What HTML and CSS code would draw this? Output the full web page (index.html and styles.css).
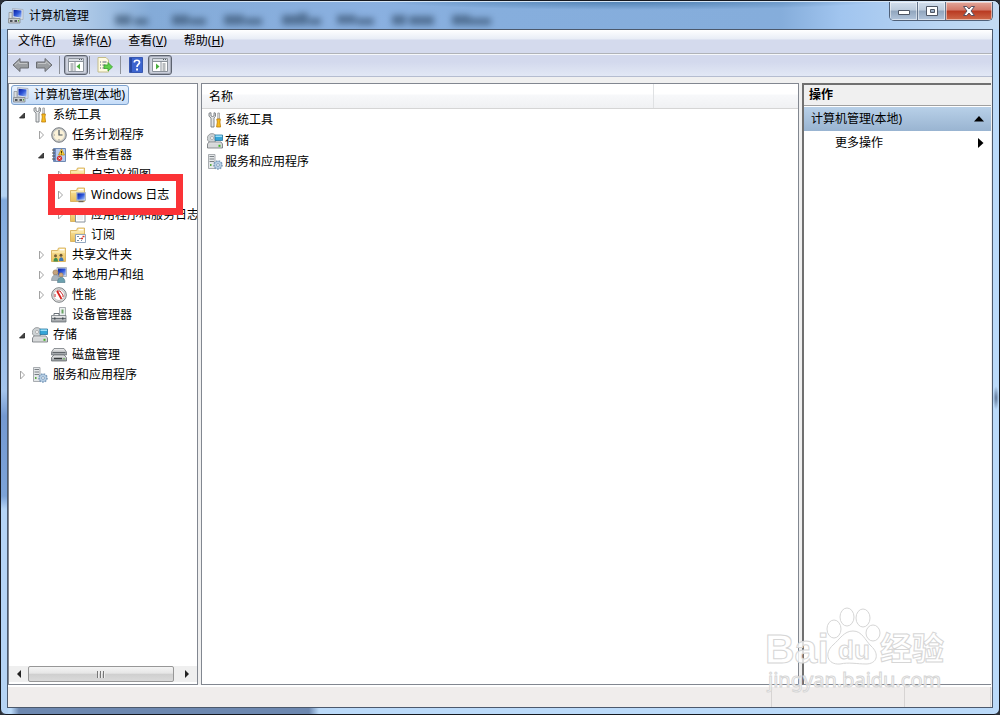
FILE: index.html
```html
<!DOCTYPE html>
<html lang="zh-CN">
<head>
<meta charset="utf-8">
<title>计算机管理</title>
<link rel="stylesheet" href="styles.css">
</head>
<body>
<svg class="sprite" aria-hidden="true">
  <defs>
    <linearGradient id="g-metal" x1="0" y1="0" x2="0" y2="1"><stop offset="0" stop-color="#f4f4f4"/><stop offset="1" stop-color="#8f9498"/></linearGradient>
    <linearGradient id="g-fold" x1="0" y1="0" x2="0" y2="1"><stop offset="0" stop-color="#fbe7a4"/><stop offset="1" stop-color="#e9c05c"/></linearGradient>
    <linearGradient id="g-screen" x1="0" y1="0" x2="1" y2="1"><stop offset="0" stop-color="#0a1d9c"/><stop offset=".5" stop-color="#2f57d8"/><stop offset="1" stop-color="#a9c6f8"/></linearGradient>
    <symbol id="i-computer" viewBox="0 0 16 16">
      <path d="M4.500.5 15 1.500V11.500L4.500 9.500Z" fill="#dfe6ee" stroke="#a3acb8" stroke-width=".8"/>
      <path d="M5.500 1.800 13.500 2.600V9.700L5.500 8.300Z" fill="url(#g-screen)"/>
      <path d="M1 4.500h3v6H1z" fill="#d9dcdf" stroke="#878c92" stroke-width=".7"/>
      <path d="M.5 10.500h11.500v4.500H.5z" fill="#c6cacd" stroke="#85898d" stroke-width=".8"/>
      <path d="M2 12h2.500v2H2zM6.500 12h2.500v2H6.500z" fill="#4e555b"/><path d="M10 12h1v1.500h-1z" fill="#53a52f"/>
    </symbol>
    <symbol id="i-tools" viewBox="0 0 16 16">
      <path d="M2 1.200v3L4 6v9h3V6l1.500-1.800v-3L7 .7V4L5.500 4.500 4 4V.7Z" fill="#e3e5e6" stroke="#777c80" stroke-width=".9"/>
      <path d="M10.800 1h1.600v6h-1.600z" fill="#eee" stroke="#888" stroke-width=".7"/>
      <path d="M9.800 7h3.600l-.5 3 .7 5h-4l.7-5Z" fill="#f8bd20" stroke="#bc7c08" stroke-width=".8"/>
    </symbol>
    <symbol id="i-clock" viewBox="0 0 16 16">
      <circle cx="8" cy="8" r="7.300" fill="#bfc2c4" stroke="#7d8184"/><circle cx="8" cy="8" r="5.600" fill="#fbf2d8" stroke="#e3ddc9" stroke-width=".6"/>
      <path d="M8 3v5h3.500" fill="none" stroke="#48545e" stroke-width="1.200"/><path d="M8 12v1.500M3 8h1" stroke="#999"/>
    </symbol>
    <symbol id="i-event" viewBox="0 0 16 16">
      <path d="M2.500 1.500h12v13h-12z" fill="#b6cbed" stroke="#6f89b3"/><path d="M3 2h2v12H3z" fill="#6c89bd"/>
      <path d="M1 3h3M1 6h3M1 9h3M1 12h3" stroke="#555"/>
      <path d="M10.500 2 13.500 8H7.500Z" fill="#fad33b" stroke="#c38b0a" stroke-width=".7"/><path d="M10.500 4v2.300M10.500 6.800v.7" stroke="#493600"/>
      <circle cx="8.500" cy="11.300" r="2.600" fill="#d42c2c"/><path d="m7.500 10.300 2 2m0-2-2 2" stroke="#fff" stroke-width=".8"/>
    </symbol>
    <symbol id="i-folder" viewBox="0 0 16 16">
      <path d="M.5 3.500h6l1-2.500h7v13.500H.5z" fill="url(#g-fold)" stroke="#d3aa50" stroke-width=".8"/><path d="M8.500 2h5v1.500h-5z" fill="#fff"/><path d="M1 5h13" stroke="#fff3c6"/>
    </symbol>
    <symbol id="i-filter" viewBox="0 0 16 16">
      <use href="#i-folder"/><path d="M8 8h7l-2.500 3v4l-2-1v-3Z" fill="#8a9097" stroke="#51575c" stroke-width=".7"/>
    </symbol>
    <symbol id="i-winlog" viewBox="0 0 16 16">
      <use href="#i-folder"/><path d="M6.500 5.500h9v8h-9z" fill="#dce3ec" stroke="#9aa3ad" stroke-width=".7"/><path d="M7.300 6.300h7.500v6.400H7.300z" fill="url(#g-screen)"/><path d="M8.500 14.700h5" stroke="#555"/>
    </symbol>
    <symbol id="i-applog" viewBox="0 0 16 16">
      <use href="#i-folder"/><path d="M5.500 5.500h9.500v9.500h-9.500z" fill="#fff" stroke="#88919a"/><path d="M7 8h6M7 10h6M7 12h6" stroke="#dde2e7"/>
    </symbol>
    <symbol id="i-subs" viewBox="0 0 16 16">
      <use href="#i-folder"/><path d="M5.500 7.500h10v8h-10z" fill="#fff" stroke="#7893b2" stroke-width=".8"/><path d="M7 9.500h2M9 11.500h2M7 13.500h2M11 13.500h1" stroke="#788da3"/><path d="M11 11.500h2M12.500 9.500h2" stroke="#d6372b" stroke-width="1.400"/>
    </symbol>
    <symbol id="i-share" viewBox="0 0 16 16">
      <use href="#i-folder"/><circle cx="4.500" cy="8.700" r="1.500" fill="#74603a"/><circle cx="10" cy="8.300" r="1.500" fill="#6c5635"/><path d="M2.500 14.500c0-5 4.500-5 4.500 0Z" fill="#3e8e4d"/><path d="M8 14c0-5 4.500-5 4.500 0Z" fill="#3c76b8"/>
    </symbol>
    <symbol id="i-users" viewBox="0 0 16 16">
      <path d="M6 .5h9.500V9.500H6z" fill="#d9e0ea" stroke="#a0a8b4" stroke-width=".8"/><path d="M7 1.500h7.700v7H7z" fill="url(#g-screen)"/>
      <circle cx="4.500" cy="5.500" r="2.600" fill="#c6a47d" stroke="#8f7455" stroke-width=".6"/><path d="M.5 13.500c0-7.500 8-7.500 8 0Z" fill="#aab3bb" stroke="#7e8890" stroke-width=".6"/>
      <circle cx="10" cy="8" r="2.200" fill="#cfa981" stroke="#8f7455" stroke-width=".6"/><path d="M6.500 15.500c0-7 7.500-7 7.500 0Z" fill="#6ba0ae" stroke="#4b7686" stroke-width=".6"/>
    </symbol>
    <symbol id="i-perf" viewBox="0 0 16 16">
      <circle cx="8" cy="8" r="7.300" fill="#e4e4e4" stroke="#7c8083"/><circle cx="8" cy="8" r="5.500" fill="#fff" stroke="#a6a6a6" stroke-width=".7"/><path d="M6 4 10.500 12" stroke="#d8231e" stroke-width="1.800"/><path d="M4 10V7M6 4h3l3 4v2" fill="none" stroke="#c4292c"/>
    </symbol>
    <symbol id="i-device" viewBox="0 0 16 16">
      <path d="M8.500.5h6v9h-6z" fill="#eceff0" stroke="#94999d" stroke-width=".8"/><path d="M10.500 2.500h2v4h-2z" fill="#6aa464"/>
      <path d="M.5 8.500h14.500V15H.5z" fill="url(#g-metal)" stroke="#71787d" stroke-width=".8"/><path d="M3 8V6.500h5v2M1 11.500h14" fill="none" stroke="#697076"/><path d="M3 10.500h1.500v2H3zM11 10.500h1.500v2H11z" fill="#454d53"/>
    </symbol>
    <symbol id="i-storage" viewBox="0 0 16 16">
      <circle cx="5" cy="5.300" r="4.700" fill="#cdd2d4" stroke="#8b8f92" stroke-width=".8"/><circle cx="5" cy="5" r="1.500" fill="#fff" stroke="#999" stroke-width=".7"/>
      <path d="M8 2h7.500v5.500H8z" fill="#36a5d7" stroke="#27749d" stroke-width=".8"/><path d="M8.500 2.500H15v1.500H8.500z" fill="#9ddef7"/>
      <path d="M2 9h12l1.500 2V15H.5v-4Z" fill="url(#g-metal)" stroke="#6e7478" stroke-width=".8"/><path d="M1 11h14v3.500H1z" fill="#d6d8d9"/><path d="M11.500 11.800h2v2h-2z" fill="#42b424"/>
    </symbol>
    <symbol id="i-disk" viewBox="0 0 16 16">
      <path d="M3 1.500h10L15.500 5v3H.5V5Z" fill="url(#g-metal)" stroke="#74797d" stroke-width=".8"/><path d="M1.500 5.500h13" stroke="#61666a"/><path d="M3 8h10l2.500 2.500V14H.5v-3.500Z" fill="url(#g-metal)" stroke="#696e72" stroke-width=".8"/><path d="M3 11.500h8" stroke="#35393b" stroke-width="1.400"/><path d="M12 11h2v1.500h-2z" fill="#82b676"/>
    </symbol>
    <symbol id="i-services" viewBox="0 0 16 16">
      <path d="M1.500.5h6.500v14h-6.500z" fill="#e4e7e9" stroke="#959b9f" stroke-width=".8"/><path d="M2.500 2.500h4.500M2.500 5h4.500M2.500 7.500h4.500" stroke="#7a8085"/><path d="M3 10h1.500v2H3z" fill="#59a842"/>
      <circle cx="11" cy="11" r="4" fill="#a5c1dc" stroke="#7e9dbb" stroke-width="1.600" stroke-dasharray="1.600 1.100"/><circle cx="11" cy="11" r="3" fill="#b9d0e6"/><circle cx="11" cy="11" r="1.400" fill="#fff" stroke="#6688aa" stroke-width=".7"/>
    </symbol>
    <symbol id="i-closed" viewBox="0 0 10 10"><path d="M3.500 1v8l4-4Z" fill="#fff" stroke="#a3a3a3"/></symbol>
    <symbol id="i-open" viewBox="0 0 10 10"><path d="M7.500 3v5H2.500Z" fill="#444" stroke="#222" stroke-width=".8"/></symbol>
    <symbol id="i-back" viewBox="0 0 18 16"><path d="M1 8 8 1.500V5h8.500v6H8v3.500Z" fill="#9a9da0" stroke="#6a6d72"/><path d="M3 8 7 4.500V6.500h8" fill="none" stroke="#c3c5c7"/></symbol>
    <symbol id="i-tree" viewBox="0 0 18 16">
      <path d="M1.500 1.500h15v13h-15z" fill="#fff" stroke="#8b929b"/><path d="M2 2h14v2H2z" fill="#d7dce2"/><path d="M2 4.500h14M8 5v9" stroke="#8b929b"/><path d="M12 2.500h1M14 2.500h1" stroke="#545b65"/><path d="M3.500 7h3M3.500 9h3M3.500 11h3M3.500 13h3" stroke="#71787f"/><path d="M13 6.500v6L9.500 9.500Z" fill="#49ae3d"/>
    </symbol>
    <symbol id="i-panel" viewBox="0 0 18 16">
      <path d="M1.500 1.500h15v13h-15z" fill="#fff" stroke="#8b929b"/><path d="M2 2h14v2H2z" fill="#d7dce2"/><path d="M2 4.500h14M10 5v9" stroke="#8b929b"/><path d="M12 2.500h1M14 2.500h1" stroke="#545b65"/><path d="M11.500 7h3M11.500 9h3M11.500 11h3M11.500 13h3" stroke="#71787f"/><path d="M5 6.500v6L8.500 9.500Z" fill="#49ae3d"/>
    </symbol>
    <symbol id="i-export" viewBox="0 0 16 16">
      <path d="M1 .5h8L11.500 3v12H1z" fill="#fffbe1" stroke="#c3bc8b"/><path d="M3 5h1M5.500 5h4M3 8h1M5.500 8h3M3 11h1M5.500 11h3" stroke="#5b667d"/><path d="M7 8h4V5.500l4.500 4.500-4.500 4V11.500H7Z" fill="#61cf4b" stroke="#36a22c" stroke-width=".8"/>
    </symbol>
    <symbol id="i-help" viewBox="0 0 14 16">
      <path d="M.5.500h13v15H.5z" fill="#3c64cf" stroke="#3858b0"/><path d="M1 1h2v14H1z" fill="#2848a2"/><path d="M5.300 5.500C5.300 2.500 10.500 2.500 10.500 5.500 10.500 7.500 8 7.500 8 10" fill="none" stroke="#fff" stroke-width="1.700"/><path d="M7.100 11.500H9v2H7.100z" fill="#fff"/>
    </symbol>
  </defs>
</svg>

<div class="window">
  <header class="titlebar">
    <svg class="backdrop" viewBox="0 0 400 28" aria-hidden="true">
      <g class="smudge">
        <path d="M15 14h16v10H15zM34 17h14v7H34zM72 14h17v10H72zM90 17h16v7H90zM124 14h20v10H124zM145 17h17v7H145zM182 14h16v10H182zM198 12h10v12H198zM209 17h12v7H209zM237 14h19v9H237zM257 17h17v7H257zM292 14h14v10H292zM309 15h25v9H309zM352 14h18v10H352zM370 17h21v7H370z"/>
      </g>
    </svg>
    <svg class="icon"><use href="#i-computer"/></svg>
    <h1 class="title">计算机管理</h1>
    <div class="controls">
      <button class="ctl" aria-label="最小化"><svg width="14" height="12"><path d="M1.500 5.500h11v4h-11z" fill="#fff" stroke="#4e5665"/></svg></button>
      <button class="ctl" aria-label="最大化"><svg width="14" height="12"><path d="M1.500 1.500h11v9h-11zM5.500 4.500v3h4v-3z" fill="#fff" fill-rule="evenodd" stroke="#4e5665"/></svg></button>
      <button class="ctl ctl-close" aria-label="关闭"><svg width="14" height="12"><path d="M1.500 1.500h3.300L7 4l2.200-2.500h3.300L9 6l3.500 4.500H9.200L7 8l-2.200 2.500H1.500L5 6Z" fill="#fff" stroke="#575061"/></svg></button>
    </div>
  </header>

  <div class="client">
    <nav class="menubar">
      <button class="menu">文件(<u>F</u>)</button>
      <button class="menu">操作(<u>A</u>)</button>
      <button class="menu">查看(<u>V</u>)</button>
      <button class="menu">帮助(<u>H</u>)</button>
    </nav>
    <div class="toolbar">
      <button class="tool" aria-label="后退"><svg width="18" height="16"><use href="#i-back"/></svg></button>
      <button class="tool flip" aria-label="前进"><svg width="18" height="16"><use href="#i-back"/></svg></button>
      <span class="sep"></span>
      <button class="tool pressed" aria-label="显示/隐藏控制台树"><svg width="18" height="16"><use href="#i-tree"/></svg></button>
      <span class="sep"></span>
      <button class="tool" aria-label="导出列表"><svg width="18" height="16"><use href="#i-export"/></svg></button>
      <span class="sep"></span>
      <button class="tool" aria-label="帮助"><svg width="14" height="16"><use href="#i-help"/></svg></button>
      <button class="tool pressed" aria-label="显示/隐藏操作窗格"><svg width="18" height="16"><use href="#i-panel"/></svg></button>
    </div>

    <main class="panes">
      <section class="pane tree-pane">
        <div class="tree">
          <div class="root"><svg class="icon"><use href="#i-computer"/></svg><span>计算机管理(本地)</span></div>
          <ul class="branch">
            <li>
              <div class="node"><svg class="twisty"><use href="#i-open"/></svg><svg class="icon"><use href="#i-tools"/></svg><span>系统工具</span></div>
              <ul class="branch nested">
                <li><div class="node"><svg class="twisty"><use href="#i-closed"/></svg><svg class="icon"><use href="#i-clock"/></svg><span>任务计划程序</span></div></li>
                <li>
                  <div class="node"><svg class="twisty"><use href="#i-open"/></svg><svg class="icon"><use href="#i-event"/></svg><span>事件查看器</span></div>
                  <ul class="branch nested">
                    <li><div class="node"><svg class="twisty"><use href="#i-closed"/></svg><svg class="icon"><use href="#i-filter"/></svg><span>自定义视图</span></div></li>
                    <li><div class="node marked"><svg class="twisty"><use href="#i-closed"/></svg><svg class="icon"><use href="#i-winlog"/></svg><span>Windows 日志</span></div></li>
                    <li><div class="node"><svg class="twisty"><use href="#i-closed"/></svg><svg class="icon"><use href="#i-applog"/></svg><span>应用程序和服务日志</span></div></li>
                    <li><div class="node"><span class="twisty"></span><svg class="icon"><use href="#i-subs"/></svg><span>订阅</span></div></li>
                  </ul>
                </li>
                <li><div class="node"><svg class="twisty"><use href="#i-closed"/></svg><svg class="icon"><use href="#i-share"/></svg><span>共享文件夹</span></div></li>
                <li><div class="node"><svg class="twisty"><use href="#i-closed"/></svg><svg class="icon"><use href="#i-users"/></svg><span>本地用户和组</span></div></li>
                <li><div class="node"><svg class="twisty"><use href="#i-closed"/></svg><svg class="icon"><use href="#i-perf"/></svg><span>性能</span></div></li>
                <li><div class="node"><span class="twisty"></span><svg class="icon"><use href="#i-device"/></svg><span>设备管理器</span></div></li>
              </ul>
            </li>
            <li>
              <div class="node"><svg class="twisty"><use href="#i-open"/></svg><svg class="icon"><use href="#i-storage"/></svg><span>存储</span></div>
              <ul class="branch nested">
                <li><div class="node"><span class="twisty"></span><svg class="icon"><use href="#i-disk"/></svg><span>磁盘管理</span></div></li>
              </ul>
            </li>
            <li><div class="node"><svg class="twisty"><use href="#i-closed"/></svg><svg class="icon"><use href="#i-services"/></svg><span>服务和应用程序</span></div></li>
          </ul>
        </div>
        <div class="scrollbar">
          <button class="scroll-btn" aria-label="向左滚动"><svg width="6" height="8"><path d="M5 0v8L1 4Z" fill="#222"/></svg></button>
          <div class="thumb"><i></i><i></i><i></i></div>
          <button class="scroll-btn scroll-end" aria-label="向右滚动"><svg width="6" height="8"><path d="M1 0v8l4-4Z" fill="#222"/></svg></button>
        </div>
      </section>

      <section class="pane list-pane">
        <table class="list">
          <thead><tr><th>名称</th><th class="filler" aria-label="空列"></th></tr></thead>
          <tbody>
            <tr><td colspan="2"><div class="item"><svg class="icon"><use href="#i-tools"/></svg>系统工具</div></td></tr>
            <tr><td colspan="2"><div class="item"><svg class="icon"><use href="#i-storage"/></svg>存储</div></td></tr>
            <tr><td colspan="2"><div class="item"><svg class="icon"><use href="#i-services"/></svg>服务和应用程序</div></td></tr>
          </tbody>
        </table>
      </section>

      <aside class="pane actions">
        <h2 class="actions-title">操作</h2>
        <button class="actions-group"><span>计算机管理(本地)</span><svg width="10" height="6"><path d="M0 5.500 5 0l5 5.500Z"/></svg></button>
        <button class="actions-item"><span>更多操作</span><svg width="6" height="10"><path d="M0 0v10l5.500-5Z"/></svg></button>
      </aside>
    </main>

    <footer class="status"><span class="cell grow"></span><span class="cell mid"></span><span class="cell end"></span></footer>
  </div>

  <svg class="watermark" viewBox="0 0 190 94" role="img" aria-label="Baidu 经验">
    <g class="outline">
      <ellipse cx="72" cy="26" rx="7" ry="9"/><ellipse cx="85" cy="14" rx="7" ry="9"/><ellipse cx="101" cy="15" rx="7" ry="9"/><ellipse cx="111" cy="30" rx="7" ry="8"/>
      <path d="M91 28c9 0 12 9 18 15 9 8 6 18-5 18-9 0-17-2-26 0-13 1-16-11-7-19 7-6 11-14 20-14Z"/>
      <text x="3" y="60" class="wm-big">Bai</text>
      <text x="76" y="56" class="wm-du">du</text>
      <text x="118" y="57" class="wm-cjk">经验</text>
      <text x="6" y="84" class="wm-url">jingyan.baidu.com</text>
    </g>
  </svg>
</div>
</body>
</html>
```
FILE: styles.css
```css
*, ::before { box-sizing: border-box; }

body {
  margin: 0;
  background: #2b3038;
  color: #000;
  font: 12px/20px "Noto Sans", "Noto Sans CJK SC", sans-serif;
}

button {
  margin: 0;
  padding: 0;
  border: 0;
  background: none;
  color: inherit;
  font: inherit;
}

ul { margin: 0; padding: 0; list-style: none; }
svg { display: block; flex: none; }
.sprite { position: absolute; width: 0; height: 0; }
.icon { width: 16px; height: 16px; }

.window {
  position: relative;
  display: flex;
  flex-direction: column;
  min-height: 100vh;
  padding: 0 6px 6px;
  border: 1px solid #15181f;
  border-radius: 7px 7px 6px 6px;
  background:
    linear-gradient(90deg, transparent 10px, #6d88b0 18px, #6d88b0 308px, transparent 318px) left bottom / 100% 6px no-repeat,
    radial-gradient(closest-side, #5f7696, transparent) right 385px / 6px 24px no-repeat,
    linear-gradient(#a9c9ec, #b4d3f2 195px, #83abdd 199px, #a4c4ec 390px, #7499d1 415px, #7ca3d8 495px, #b5d4f5 508px) left top / 7px 100% no-repeat,
    #bbdaf9;
}

.titlebar {
  position: relative;
  display: flex;
  align-items: center;
  height: 28px;
  margin: 0 -6px;
  padding: 1px 0 0 7px;
  border-radius: 6px 6px 0 0;
  background:
    radial-gradient(closest-side, rgba(64, 116, 166, .8), transparent) 380px -9px / 500px 18px no-repeat,
    linear-gradient(90deg, #c1d7ee, #b0cbe8 80px, #84abd8 150px, #8ab0e0 370px, #86aedd 480px, #85addb 780px, #a1c5ef 840px, #b9d5f3 940px, #c3dbf3);
  box-shadow: inset 0 1px #d5e5f5;
}

.backdrop { position: absolute; left: 99px; top: 0; width: 400px; height: 28px; }
.smudge { fill: #2f4966; opacity: .6; filter: blur(3px); }
.title { position: relative; margin: 0 0 0 5px; font-size: 12px; font-weight: 400; }

.controls {
  display: flex;
  align-self: flex-start;
  height: 19px;
  margin: 0 6px 0 auto;
  border: 1px solid #4f6078;
  border-top: 0;
  border-radius: 0 0 5px 5px;
  overflow: hidden;
}
.ctl {
  display: grid;
  place-items: center;
  width: 28px;
  border-right: 1px solid #65758c;
  background: linear-gradient(#d3dfed, #bccbdc 45%, #91a5bd 50%, #b2c5dc);
  box-shadow: inset 0 0 0 1px rgba(255, 255, 255, .5);
}
.ctl-close { width: 46px; border: 0; background: linear-gradient(#e2a79b, #d27868 45%, #b93921 50%, #ce6a4a); }

.client {
  display: flex;
  flex: 1;
  flex-direction: column;
  border: 1px solid #4c596c;
  background: #f0f0f0;
}

.menubar {
  display: flex;
  gap: 17px;
  height: 24px;
  padding: 1px 10px 2px;
  border-bottom: 1px solid #b0b3b8;
  background: linear-gradient(#fff, #e8edf6 9px, #d4daed 10px, #d4daed);
}
.toolbar {
  display: flex;
  align-items: center;
  gap: 1px;
  height: 23px;
  padding-left: 2px;
  border-bottom: 1px solid #b5bdd0;
  box-shadow: inset 0 1px #f6f8fb;
  background: linear-gradient(#d3d9ed 8px, #e2e8f5);
}
.tool { display: grid; place-items: center; width: 22px; height: 20px; }
.flip { transform: scaleX(-1); }
.pressed { width: 24px; border: 1px solid #5d6370; border-radius: 3px; background: #cfd3df; box-shadow: inset 0 0 1px 1px #a1a7b4; }
.sep { width: 1px; height: 18px; margin: 0 3px; background: #8d9199; }
.pressed + .sep { margin-left: 0; }

.panes {
  display: grid;
  flex: 1;
  grid-template-columns: 190px minmax(0, 1fr) 189px;
  gap: 3px;
  padding: 6px 1px 0 0;
}
.pane { min-width: 0; border: 1px solid #828790; background: #fff; }

.tree-pane { display: flex; flex-direction: column; justify-content: space-between; padding-bottom: 2px; overflow: hidden; }
.tree { padding: 1px 0 0 2px; white-space: nowrap; }
.root {
  display: inline-flex;
  align-items: center;
  gap: 5px;
  height: 20px;
  padding: 0 3px 0 1px;
  border: 1px solid #7da2ce;
  border-radius: 3px;
  background: linear-gradient(#e9f2fd, #c5dcf8);
  vertical-align: top;
}
.branch { padding-left: 6px; }
.nested { padding-left: 19px; }
.node { display: flex; align-items: center; height: 20px; }
.node .icon { margin-right: 5px; }
.twisty { width: 10px; height: 10px; margin-right: 5px; }

.marked { position: relative; z-index: 1; }
.marked::before {
  content: "";
  position: absolute;
  z-index: -1;
  left: -7px;
  top: -11px;
  width: 135px;
  height: 41px;
  border: 7px solid #fb3337;
  background: #fff;
}

.scrollbar { display: flex; height: 16px; padding: 0 1px; background: #efefef; }
.scroll-btn { display: grid; place-items: center; width: 18px; }
.scroll-end { width: 22px; padding-left: 4px; }
.thumb {
  display: flex;
  flex: 1;
  align-items: center;
  justify-content: center;
  gap: 1px;
  border: 1px solid #979797;
  border-radius: 2px;
  background: linear-gradient(#f4f4f4, #e6e6e6 45%, #cfcfcf 50%, #dadada);
}
.thumb i { width: 2px; height: 7px; background: #777; border-right: 1px solid #eee; }

.list { width: 100%; border-collapse: collapse; table-layout: fixed; }
.list th {
  height: 24px;
  padding: 2px 7px 0;
  border-bottom: 1px solid #d5d5d5;
  background: linear-gradient(#fff 10px, #f7f8fa 11px, #f0f1f3);
  font-weight: 400;
  text-align: left;
}
.list .filler { width: 145px; border-left: 1px solid #dfe1e3; }
.list td { padding: 0 5px; }
.list tbody tr:first-child td { padding-top: 1px; }
.item { display: flex; align-items: center; gap: 2px; height: 21px; }

.actions { border-width: 2px 0 1px 2px; border-color: #707070 #aaa #828790 #707070; }
.actions-title { height: 21px; margin: 0; padding: 0 5px; border-bottom: 1px solid #a0a0a0; background: #f0f0f0; font-size: 12px; font-weight: 700; }
.actions-group,
.actions-item { display: flex; align-items: center; justify-content: space-between; width: 100%; height: 24px; padding: 0 7px; }
.actions-group { margin-top: 1px; background: linear-gradient(#b8d0e8, #99b4d1); }
.actions-item { padding-left: 31px; }

.status { display: flex; height: 22px; border-top: 2px solid #fff; background: #f0edec; }
.cell { border-right: 1px solid #d7d4d3; }
.grow { flex: 1; }
.mid { width: 133px; }
.end { width: 86px; margin-right: 1px; }

.watermark { position: absolute; right: 47px; bottom: 17px; width: 190px; height: 94px; pointer-events: none; }
.outline { fill: #fff; fill-opacity: .8; stroke: #d6d6d6; stroke-width: 1; }
.outline text { font-family: "Liberation Sans", "Noto Sans CJK SC", sans-serif; }
.wm-big { font-size: 41px; font-weight: 700; }
.wm-du { font-size: 26px; font-weight: 700; }
.outline .wm-cjk { font-size: 32px; font-weight: 700; }
.outline .wm-url { font-family: "Noto Sans", sans-serif; font-size: 20px; }
```
